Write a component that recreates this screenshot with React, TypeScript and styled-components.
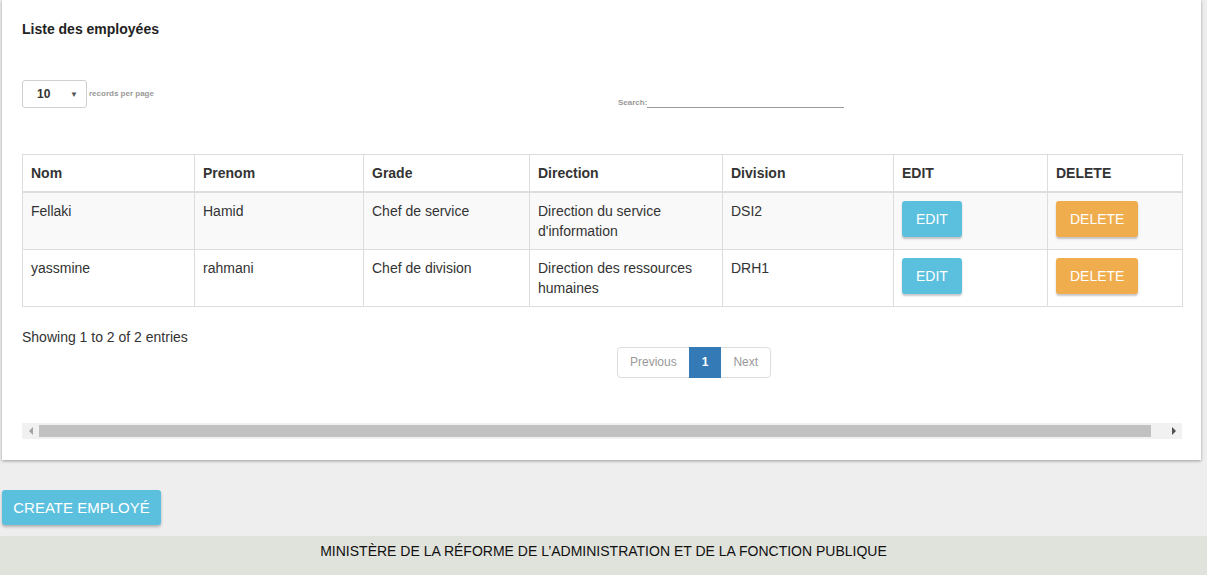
import React from "react";
import styled, { createGlobalStyle } from "styled-components";

const Global = createGlobalStyle`
  html, body { margin: 0; padding: 0; }
  body {
    background: #eeeeee;
    font-family: "Liberation Sans", Arial, sans-serif;
    color: #333;
    font-size: 14px;
    overflow: hidden;
  }
`;

const Page = styled.div`
  width: 1207px;
  height: 575px;
  display: flex;
  flex-direction: column;
`;

const Card = styled.section`
  margin: 0 6px 0 2px;
  background: #fff;
  box-shadow: 0 1px 3px rgba(0, 0, 0, 0.35);
  padding: 21px 19px 21px 20px;
  display: flex;
  flex-direction: column;
`;

const Title = styled.h4`
  margin: 0;
  font-size: 14px;
  line-height: 17px;
  font-weight: bold;
  color: #222;
`;

const Controls = styled.div`
  margin-top: 42px;
  display: grid;
  grid-template-columns: 596px 1fr;
  align-items: end;
`;

const LengthBox = styled.div`
  display: flex;
  align-items: center;
  gap: 2px;
`;

const Select = styled.div`
  height: 26px;
  width: 41px;
  border: 1px solid #cfcfcf;
  border-radius: 3px;
  display: flex;
  align-items: center;
  justify-content: space-between;
  padding: 0 8px 0 14px;
  box-sizing: content-box;
  font-size: 12px;
  font-weight: bold;
  color: #333;
`;

const Arrow = styled.span`
  font-size: 8px;
  color: #555;
`;

const TinyLabel = styled.span`
  font-size: 8px;
  font-weight: bold;
  color: #999;
  margin-top: -2px;
`;

const SearchBox = styled.label`
  display: flex;
  align-items: flex-end;
`;

const SearchInput = styled.div`
  width: 197px;
  height: 12px;
  border-bottom: 1px solid #999;
`;

const SearchText = styled(TinyLabel)`
  margin: 0 0 1px;
`;

const Table = styled.table`
  margin-top: 46px;
  width: 1160px;
  border-collapse: collapse;
  table-layout: fixed;
  font-size: 14px;
  line-height: 20px;
  color: #333;
`;

const Th = styled.th`
  text-align: left;
  font-weight: bold;
  padding: 8px;
  border: 1px solid #ddd;
  border-bottom: 2px solid #ddd;
  vertical-align: top;
`;

const Tr = styled.tr<{ $striped?: boolean }>`
  background: ${(p) => (p.$striped ? "#f9f9f9" : "#fff")};
`;

const Td = styled.td`
  padding: 8px;
  border: 1px solid #ddd;
  vertical-align: top;
`;

const ActionButton = styled.button<{ $tone: "info" | "warning" }>`
  height: 36px;
  padding: 0 14px;
  border: none;
  border-radius: 3px;
  background: ${(p) => (p.$tone === "info" ? "#5bc0de" : "#f0ad4e")};
  color: #fff;
  font-family: "Liberation Sans", Arial, sans-serif;
  font-size: 14px;
  text-transform: uppercase;
  box-shadow: 0 2px 2px rgba(0, 0, 0, 0.22);
  cursor: pointer;
  display: block;
`;

const Info = styled.div`
  margin-top: 20px;
  line-height: 20px;
  font-size: 14px;
  color: #333;
`;

const Pagination = styled.div`
  margin-left: 595px;
  display: flex;
  width: max-content;
`;

const PageBtn = styled.span<{ $active?: boolean; $first?: boolean; $last?: boolean }>`
  display: block;
  font-size: 12px;
  line-height: 17px;
  padding: 6px 12px;
  border: 1px solid ${(p) => (p.$active ? "#337ab7" : "#ddd")};
  margin-left: ${(p) => (p.$first ? "0" : "-1px")};
  background: ${(p) => (p.$active ? "#337ab7" : "#fff")};
  color: ${(p) => (p.$active ? "#fff" : "#999")};
  font-weight: ${(p) => (p.$active ? "bold" : "normal")};
  border-radius: ${(p) => (p.$first ? "4px 0 0 4px" : p.$last ? "0 4px 4px 0" : "0")};
  position: relative;
  z-index: ${(p) => (p.$active ? 1 : 0)};
`;

const ScrollTrack = styled.div`
  margin-top: 45px;
  height: 16px;
  background: #f1f1f1;
  display: flex;
  align-items: center;
`;

const ScrollArrow = styled.div<{ $dir: "left" | "right"; $dark?: boolean }>`
  width: 17px;
  height: 16px;
  display: flex;
  align-items: center;
  justify-content: center;
  &::before {
    content: "";
    width: 0;
    height: 0;
    border-top: 4px solid transparent;
    border-bottom: 4px solid transparent;
    ${(p) =>
      p.$dir === "left"
        ? `border-right: 4px solid ${p.$dark ? "#505050" : "#a3a3a3"};`
        : `border-left: 4px solid ${p.$dark ? "#505050" : "#a3a3a3"};`}
  }
`;

const ScrollThumb = styled.div`
  width: 1112px;
  height: 12px;
  background: #c1c1c1;
`;

const ScrollRest = styled.div`
  flex: 1;
`;

const Actions = styled.div`
  padding: 30px 0 11px 2px;
`;

const CreateButton = styled.button`
  height: 35px;
  width: 159px;
  padding: 0;
  border: none;
  border-radius: 3px;
  background: #5bc0de;
  color: #fff;
  font-family: "Liberation Sans", Arial, sans-serif;
  font-size: 15px;
  text-transform: uppercase;
  box-shadow: 0 2px 3px rgba(0, 0, 0, 0.25);
`;

const Footer = styled.footer`
  flex: 1;
  background: #e0e2dc;
  text-align: center;
  padding: 5px 0 0;
  line-height: 20px;
  font-size: 14px;
  color: #111;
`;

const rows = [
  {
    nom: "Fellaki",
    prenom: "Hamid",
    grade: "Chef de service",
    direction: "Direction du service d'information",
    division: "DSI2",
  },
  {
    nom: "yassmine",
    prenom: "rahmani",
    grade: "Chef de division",
    direction: "Direction des ressources humaines",
    division: "DRH1",
  },
];

const widths = [172, 169, 166, 193, 171, 154, 135];

export default function App() {
  return (
    <Page>
      <Global />
      <Card>
        <Title>Liste des employées</Title>
        <Controls>
          <LengthBox>
            <Select>
              <span>10</span>
              <Arrow>▼</Arrow>
            </Select>
            <TinyLabel>records per page</TinyLabel>
          </LengthBox>
          <SearchBox>
            <SearchText>Search:</SearchText>
            <SearchInput />
          </SearchBox>
        </Controls>
        <Table>
          <colgroup>
            {widths.map((w, i) => (
              <col key={i} style={{ width: w }} />
            ))}
          </colgroup>
          <thead>
            <tr>
              <Th>Nom</Th>
              <Th>Prenom</Th>
              <Th>Grade</Th>
              <Th>Direction</Th>
              <Th>Division</Th>
              <Th>EDIT</Th>
              <Th>DELETE</Th>
            </tr>
          </thead>
          <tbody>
            {rows.map((r, i) => (
              <Tr key={i} $striped={i % 2 === 0}>
                <Td>{r.nom}</Td>
                <Td>{r.prenom}</Td>
                <Td>{r.grade}</Td>
                <Td>{r.direction}</Td>
                <Td>{r.division}</Td>
                <Td>
                  <ActionButton $tone="info">Edit</ActionButton>
                </Td>
                <Td>
                  <ActionButton $tone="warning">Delete</ActionButton>
                </Td>
              </Tr>
            ))}
          </tbody>
        </Table>
        <Info>Showing 1 to 2 of 2 entries</Info>
        <Pagination>
          <PageBtn $first>Previous</PageBtn>
          <PageBtn $active>1</PageBtn>
          <PageBtn $last>Next</PageBtn>
        </Pagination>
        <ScrollTrack>
          <ScrollArrow $dir="left" />
          <ScrollThumb />
          <ScrollRest />
          <ScrollArrow $dir="right" $dark />
        </ScrollTrack>
      </Card>
      <Actions>
        <CreateButton>Create employé</CreateButton>
      </Actions>
      <Footer>MINISTÈRE DE LA RÉFORME DE L’ADMINISTRATION ET DE LA FONCTION PUBLIQUE</Footer>
    </Page>
  );
}
